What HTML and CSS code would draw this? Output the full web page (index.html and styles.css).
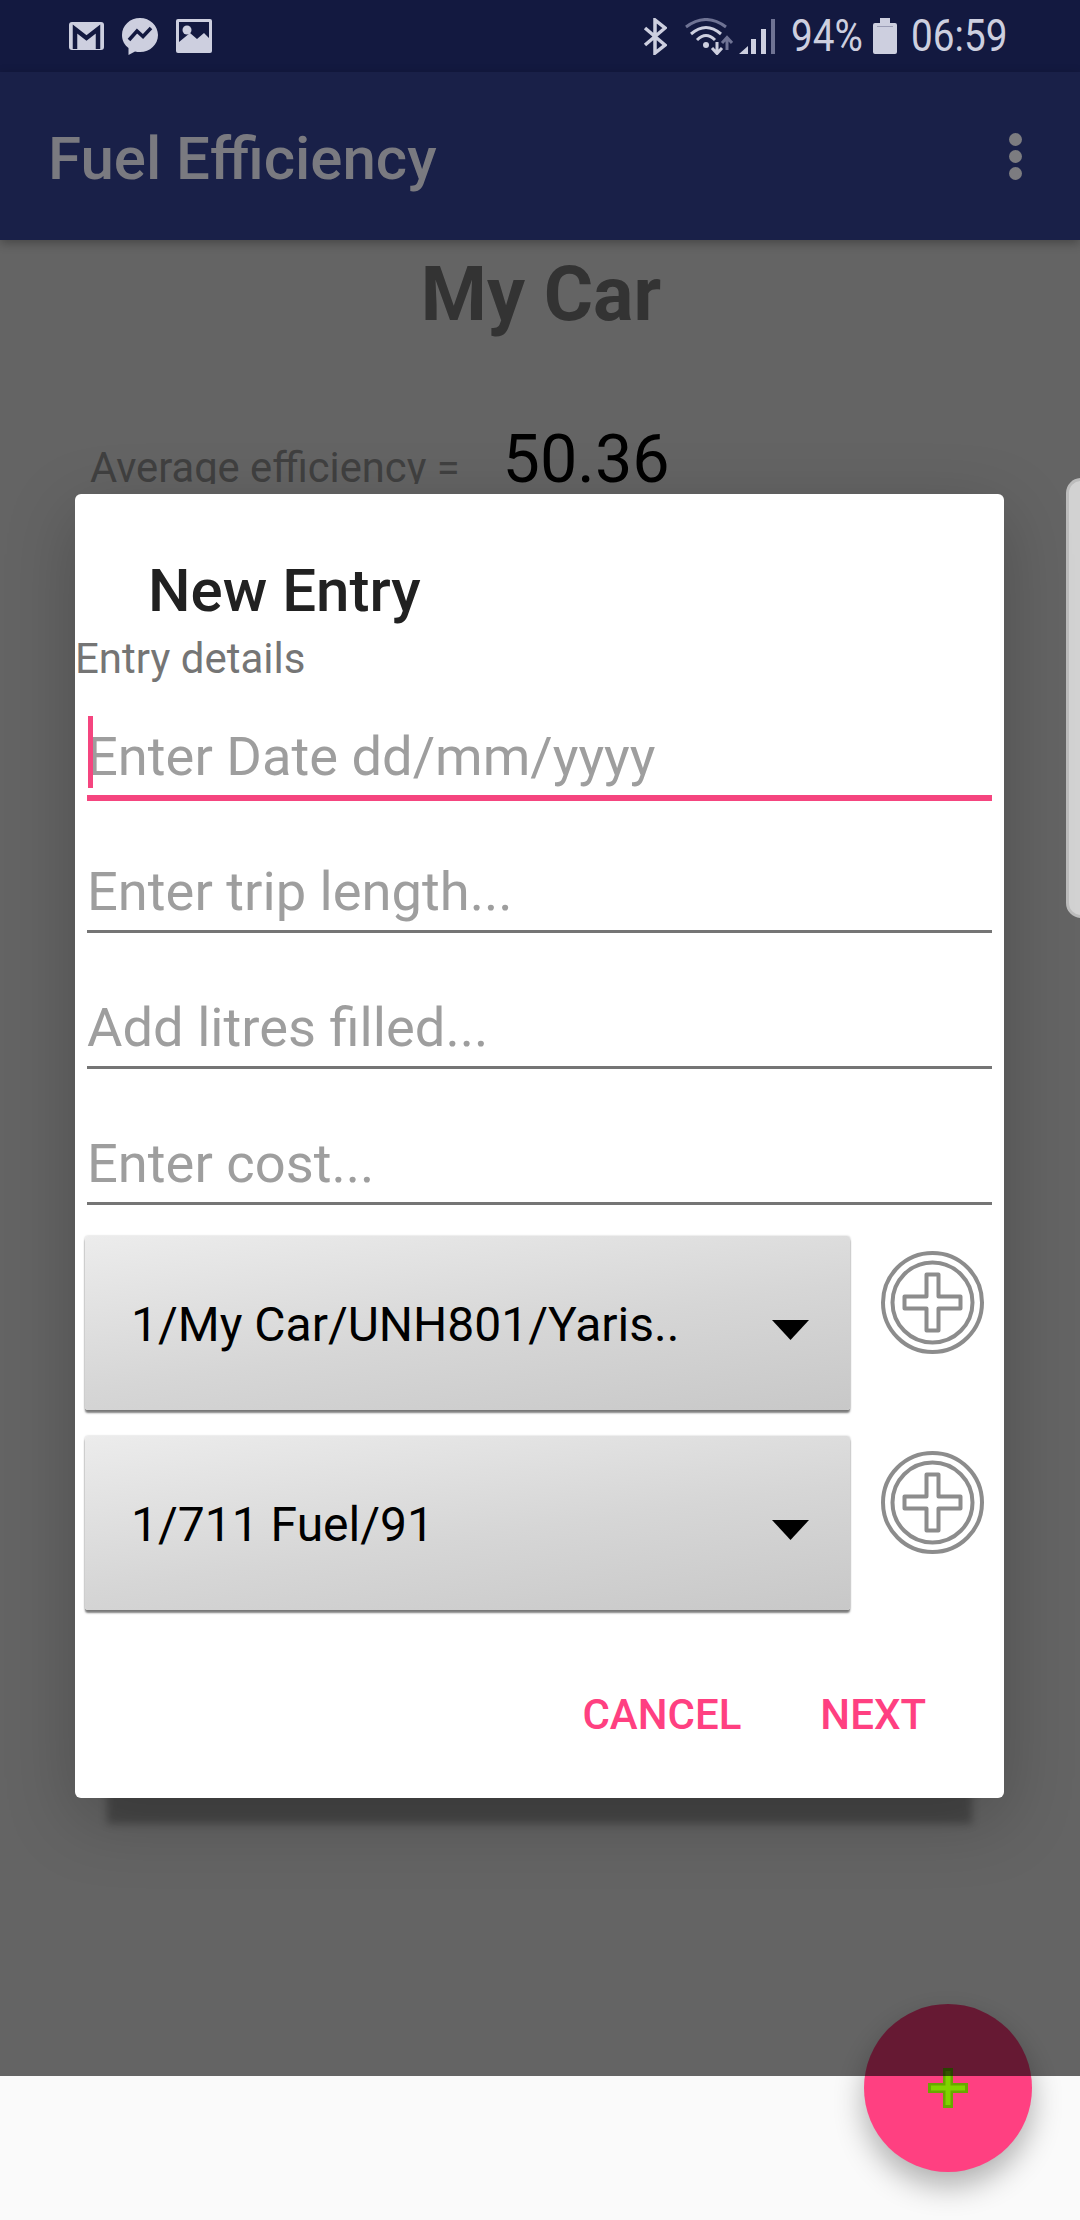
FILE: index.html
```html
<!DOCTYPE html>
<html lang="en">
<head>
  <meta charset="UTF-8">
  <title>Fuel Efficiency</title>
  <link rel="stylesheet" href="styles.css">
</head>
<body>
  <div class="page">
    <div class="status-bar">
      <div class="status-left">
        <svg width="35" height="28" viewBox="0 0 35 28"><rect width="35" height="28" rx="3" fill="#cdcfdf"/><path d="M6 27V7L17.500 16 29 7V27" fill="none" stroke="#131940" stroke-width="4.500"/></svg>
        <svg width="36" height="37" viewBox="0 0 36 37"><path d="M18 0C8 0 0 7.500 0 17c0 5.500 2.500 10 6.500 13v7l6.500-3.500c1.600.4 3.300.6 5 .6 10 0 18-7.500 18-17S28 0 18 0z" fill="#cdcfdf"/><path d="M7 22l8-9 6 5.500 8-8.500" fill="none" stroke="#131940" stroke-width="3.500"/></svg>
        <svg width="36" height="34" viewBox="0 0 36 34"><rect width="36" height="34" rx="2" fill="#cdcfdf"/><rect x="3" y="3" width="30" height="28" fill="#131940"/><circle cx="11" cy="11" r="4.500" fill="#cdcfdf"/><path d="M3 23l11-9 7 6 7-6 5 5v12H3z" fill="#cdcfdf"/></svg>
      </div>
      <div class="status-right">
        <svg class="icon-bt" width="24" height="37" viewBox="0 0 24 37"><path d="M2 10l20 17-10 8V2l10 8L2 27" fill="none" stroke="#cdcfdf" stroke-width="3.500"/></svg>
        <svg class="icon-wifi" width="48" height="37" viewBox="0 0 48 37" fill="none" stroke-width="3">
          <path d="M1 9Q21-6 41 9" stroke="#6f7394"/>
          <path d="M6 16Q21 3 36 16M12 22Q21 13 30 22" stroke="#cdcfdf"/>
          <circle cx="21" cy="27" r="3" fill="#cdcfdf" stroke="none"/>
          <path d="M32 24V35M27 30l5 5.500 5-5.500" stroke="#cdcfdf"/>
          <path d="M42 32V20M37 25l5-5.500 5 5.500" stroke="#6f7394"/>
        </svg>
        <svg class="icon-signal" width="36" height="35" viewBox="0 0 36 35"><path d="M0 35l9-8v8zM12 20h5v15h-5zM22 10h5v25h-5z" fill="#cdcfdf"/><rect x="32" width="4" height="35" fill="#6f7394"/></svg>
        <span class="status-text pct">94%</span>
        <svg class="icon-battery" width="24" height="36" viewBox="0 0 24 36"><path d="M7 0h10v5h5a2 2 0 012 2v27a2 2 0 01-2 2H2a2 2 0 01-2-2V7a2 2 0 012-2h5z" fill="#cdcfdf"/><rect x="4" y="8" width="16" height="1" fill="#9a9cb4"/></svg>
        <span class="status-text time">06:59</span>
      </div>
    </div>

    <div class="app-bar">
      <div class="app-title">Fuel Efficiency</div>
      <div class="overflow"><span></span><span></span><span></span></div>
    </div>

    <div class="content">
      <h1 class="car-name">My Car</h1>
      <div class="avg-row">
        <span class="avg-label">Average efficiency =</span>
        <span class="avg-value">50.36</span>
      </div>
    </div>

    <div class="fab">
      <svg width="40" height="40" viewBox="0 0 40 40"><path d="M20 0V40M0 20H40" stroke="#68a800" stroke-width="10"/><path d="M20 3V37M3 20H37" stroke="#80d400" stroke-width="5"/></svg>
    </div>

    <div class="scrim"></div>
    <div class="edge-handle"></div>

    <div class="dialog">
      <div class="dialog-title">New Entry</div>
      <div class="dialog-sub">Entry details</div>
      <div class="field focused"><span class="caret"></span>Enter Date dd/mm/yyyy</div>
      <div class="field">Enter trip length...</div>
      <div class="field">Add litres filled...</div>
      <div class="field">Enter cost...</div>

      <div class="picker-row">
        <div class="spinner">
          <span>1/My Car/UNH801/Yaris..</span>
          <svg width="37" height="20" viewBox="0 0 37 20"><path d="M0 0h37L18.500 20z" fill="#000"/></svg>
        </div>
        <svg class="add-btn" width="105" height="105" viewBox="0 0 105 105" fill="none" stroke="#8c8c8c" stroke-width="4"><circle cx="52.500" cy="52.500" r="49.500"/><circle cx="52.500" cy="52.500" r="40"/><path d="M46.500 24.500h12v22h22v12h-22v22h-12v-22h-22v-12h22z" stroke-linejoin="round"/></svg>
      </div>
      <div class="picker-row">
        <div class="spinner">
          <span>1/711 Fuel/91</span>
          <svg width="37" height="20" viewBox="0 0 37 20"><path d="M0 0h37L18.500 20z" fill="#000"/></svg>
        </div>
        <svg class="add-btn" width="105" height="105" viewBox="0 0 105 105" fill="none" stroke="#8c8c8c" stroke-width="4"><circle cx="52.500" cy="52.500" r="49.500"/><circle cx="52.500" cy="52.500" r="40"/><path d="M46.500 24.500h12v22h22v12h-22v22h-12v-22h-22v-12h22z" stroke-linejoin="round"/></svg>
      </div>

      <div class="dialog-actions">
        <span>CANCEL</span>
        <span>NEXT</span>
      </div>
    </div>
  </div>
</body>
</html>
```

FILE: styles.css
```css
html, body { margin: 0; padding: 0; }
body { font-family: Roboto, "Liberation Sans", sans-serif; background: #fafafa; }
.page { position: relative; width: 1080px; height: 2220px; overflow: hidden; background: #fafafa; }

.status-bar { position: relative; z-index: 4; height: 72px; background: #131940; display: flex; justify-content: space-between; align-items: center; padding: 0 74px 0 69px; box-sizing: border-box; color: #cdcfdf; }
.status-left { display: flex; align-items: center; gap: 18px; }
.status-right { display: flex; align-items: center; }
.status-text { display: block; font-size: 44px; line-height: 52px; white-space: nowrap; transform: scaleX(.88); transform-origin: left center; }
.icon-bt { margin-right: 18px; }
.icon-wifi { margin-right: 6px; }
.icon-signal { margin-right: 16px; }
.pct { width: 69px; margin-right: 13px; }
.icon-battery { margin-right: 14px; }
.time { width: 95px; }

.app-bar { position: relative; z-index: 4; height: 168px; background: #192048; display: flex; justify-content: space-between; align-items: center; padding: 0 58px 0 48px; box-shadow: 0 3px 10px rgba(0,0,0,.3); }
.app-title { margin-top: 5px; font-size: 60px; font-weight: 500; color: #7a7a80; }
.overflow { display: flex; flex-direction: column; gap: 4px; }
.overflow span { width: 13px; height: 13px; border-radius: 50%; background: #7c7c80; }

.content { height: 1836px; }
.car-name { margin: 0; padding: 10px 0 0 2px; font-size: 75.5px; line-height: 88px; font-weight: 700; color: #808080; text-align: center; }
.avg-row { margin-top: 88px; height: 58px; overflow: hidden; display: flex; align-items: baseline; padding-left: 90px; gap: 43px; }
.avg-label { font-size: 41.7px; color: #a0a0a0; line-height: 66px; }
.avg-value { font-size: 66.5px; color: #000; line-height: 66px; }

.fab { position: absolute; left: 864px; top: 2004px; width: 168px; height: 168px; border-radius: 50%; background: #ff4081; box-shadow: 0 14px 30px rgba(0,0,0,.3); display: flex; align-items: center; justify-content: center; }

.scrim { position: absolute; z-index: 2; left: 0; right: 0; top: 240px; height: 1836px; background: rgba(0,0,0,.6); }
.edge-handle { position: absolute; z-index: 3; left: 1066px; top: 478px; width: 30px; height: 440px; box-sizing: border-box; background: #d2d2d2; border: 3px solid #bcbcbc; border-radius: 16px; }

.dialog { position: absolute; z-index: 3; left: 75px; top: 494px; width: 929px; height: 1304px; box-sizing: border-box; background: #fff; border-radius: 6px; padding-top: 62px; box-shadow: 0 58px 8px -32px rgba(0,0,0,.28), 0 20px 70px rgba(0,0,0,.22); }
.dialog-title { padding-left: 73px; font-size: 60px; line-height: 70px; font-weight: 500; color: #212121; }
.dialog-sub { margin-top: 8px; font-size: 42px; line-height: 50px; color: #757575; }

.field { position: relative; margin: 64px 12px 0; padding: 0 0 7px; font-size: 54.3px; line-height: 62px; color: #9e9e9e; border-bottom: 3px solid #757575; }
.field.focused { margin-top: 42px; padding-bottom: 7px; border-bottom: 6px solid #f5457f; }
.focused + .field { margin-top: 60px; }
.caret { position: absolute; left: 1px; top: -10px; width: 5px; height: 72px; background: #f5457f; }

.picker-row { display: flex; align-items: flex-start; gap: 30px; padding-left: 10px; margin-top: 26px; }
.field + .picker-row { margin-top: 31px; }
.spinner { width: 765px; height: 174px; box-sizing: border-box; display: flex; align-items: center; justify-content: space-between; padding: 2px 41px 0 46px; font-size: 48px; color: #000; border-radius: 3px; background: linear-gradient(172deg, #ececec 0%, #d6d6d6 55%, #c8c8c8 100%); box-shadow: 0 3px 2px rgba(0,0,0,.5), 0 0 2px rgba(0,0,0,.25); }
.spinner svg { margin-top: 12px; }
.add-btn { margin-top: 14px; }

.dialog-actions { display: flex; justify-content: flex-end; gap: 79px; padding-right: 78px; margin-top: 80px; font-size: 42px; line-height: 50px; font-weight: 500; color: #ff4081; }
```
